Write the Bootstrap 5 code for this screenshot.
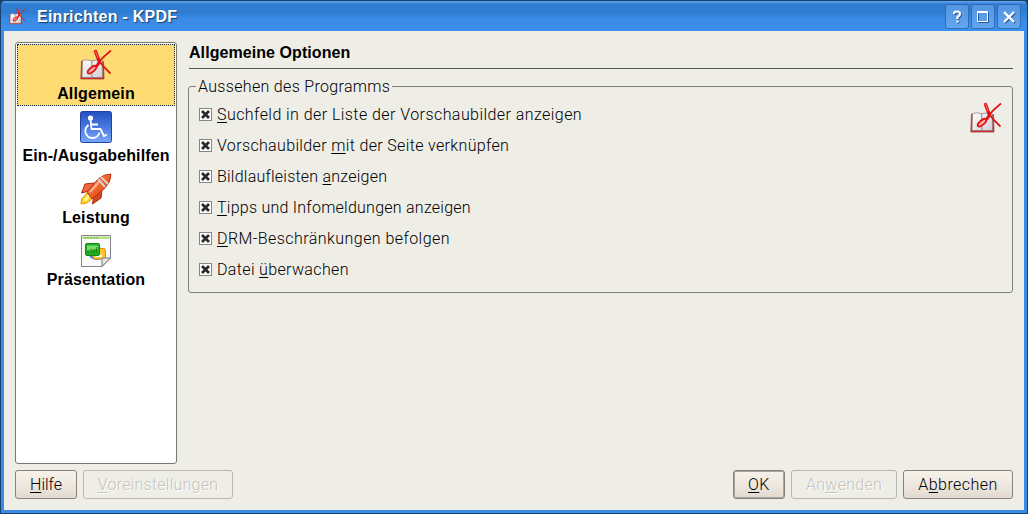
<!DOCTYPE html>
<html lang="de">
<head>
<meta charset="utf-8">
<title>Einrichten - KPDF</title>
<link href="https://cdn.jsdelivr.net/npm/bootstrap@5.3.0/dist/css/bootstrap.min.css" rel="stylesheet">
<style>
body{font:300 16px/20px Roboto,"Liberation Sans",sans-serif;color:#000;background:#173f70;width:1028px;height:514px;overflow:hidden}
.window{width:1028px;height:514px;border:1px solid #15406f;border-radius:5px 5px 0 0;background:linear-gradient(#68a7ed 0,#2f7ed3 3px,#2e7dd2 11px,#3a8ae6 18px,#3d8fed 29px,#3b8be5 30px);padding:0 3px 3px}
.titlebar{height:30px;padding:0 3px 0 5px}
.title-actions{gap:2px}
.caption{font:700 16px/20px "Liberation Sans",sans-serif;letter-spacing:.25px;color:#fff;text-shadow:1px 1px 1px #123e72;margin-left:11px;padding-top:1px}
.winbtn{width:24px;height:25px;border:1px solid #2b6dbb;border-radius:3px;background:linear-gradient(#5495df,#64a5ef);padding:0;margin-top:1px}
.client{background:#eeede6;height:479px;padding:11px 11px 11px}
.panes{gap:11px}
.pages{width:162px;height:422px;border:1px solid #777970;border-radius:3px;background:#fff;padding:1px}
.page-item{height:62px;font:700 16px/20px "Liberation Sans",sans-serif;letter-spacing:.13px;white-space:nowrap;padding-top:5px}
.page-item.active{background:#ffdc73;outline:1px dotted #123;outline-offset:-1px}
.page-item svg{width:32px;height:32px;display:block;margin-bottom:3px}
.page-title{font:700 16px/20px "Liberation Sans",sans-serif;letter-spacing:.07px;height:27px;padding-top:1px;border-bottom:1px solid #55574f;margin-left:1px}
.group{border:1px solid #808179;border-radius:3px;height:207px;margin-top:17px;padding:0 10px;position:relative}
.group-title{position:absolute;top:-10px;left:7px;background:#eeede6;padding:0 2px;letter-spacing:.32px}
.opts{padding-top:12px}
.opt{height:31px;gap:5px}
.s20{letter-spacing:.23px}.s25{letter-spacing:.25px}.s32{letter-spacing:.35px}.s41{letter-spacing:.44px}
.box{width:13px;height:13px;border:1px solid #85867f;background:#fff;display:block}
.group-icon{margin-top:15px}
.pushbtn{height:29px;border:1px solid #85847a;border-radius:3px;background:linear-gradient(#f6f2ea,#efe9e1 45%,#e2dad0);padding:0;font-weight:300;color:#000;line-height:27px}
.pushbtn.off{background:#eeede6;border-color:#b9b8b0;color:#c4c3bc;text-shadow:1px 1px #fff}
.pushbtn.ok{box-shadow:inset 0 0 0 1px #aaa69d}
.w-hilfe{width:62px}.w-vor{width:150px}.w-ok{width:52px}.w-anw{width:106px}.w-abb{width:110px}
.actions{gap:6px;margin-top:6px}
u{text-underline-offset:2px;text-decoration-thickness:1px;text-decoration-skip-ink:none}
</style>
</head>
<body>
<svg width="0" height="0" class="position-absolute">
<defs>
<linearGradient id="blue" x2="0" y2="1"><stop stop-color="#2450c0"/><stop offset=".5" stop-color="#4a7ae0"/><stop offset="1" stop-color="#78a8fa"/></linearGradient>
<linearGradient id="pageg" x2="1" y2="1"><stop stop-color="#fff"/><stop offset="1" stop-color="#cfcfd4"/></linearGradient>
<linearGradient id="rk" x2="1" y2="1"><stop stop-color="#ffab78"/><stop offset=".5" stop-color="#f0622c"/><stop offset="1" stop-color="#c5310f"/></linearGradient>
</defs>
<symbol id="book" viewBox="0 0 32 32">
<path d="M1.500 12L.8 30H24L23.500 12.500z" fill="#d62424" stroke="#a84040" stroke-width=".8"/>
<path d="M2.500 11.500Q7 10 11.800 11.800Q17 10 22.300 11.800L22.500 28.500H2z" fill="url(#pageg)" stroke="#8b7777" stroke-width=".7"/>
<path d="M11.800 12V28" stroke="#888" stroke-width="1"/>
<path d="M31 1.500Q24 7 18.500 13.500" stroke="#e01818" stroke-width="1.700" fill="none"/>
<path d="M18.500 11Q23 18 30.500 24.500" stroke="#d81414" stroke-width="1.700" fill="none"/>
<path d="M15.500 2.500L19.500 13" stroke="#e01212" stroke-width="3.400" stroke-linecap="round"/>
<path d="M15.500 2.500L18 9" stroke="#ff6a60" stroke-width="1" stroke-linecap="round"/>
<path d="M19.500 13L16.500 17.500" stroke="#e01212" stroke-width="3"/>
<ellipse cx="12" cy="20.700" rx="5.200" ry="2.200" transform="rotate(-40 12 20.700)" fill="#f9b0aa" stroke="#e31414" stroke-width="1.900"/>
</symbol>
<symbol id="cross" viewBox="0 0 11 11"><path d="M2 2L9 9M9 2L2 9" stroke="#2a2a2c" stroke-width="2.800"/></symbol>
</svg>
<div class="window d-flex flex-column">
<header class="titlebar d-flex align-items-center">
<svg width="17" height="17"><use href="#book"/></svg>
<div class="caption flex-grow-1">Einrichten - KPDF</div>
<div class="title-actions d-flex">
<button class="winbtn d-flex align-items-center justify-content-center"><svg width="22" height="22"><path d="M8 8V7.500Q8 5.500 11 5.500Q14 5.500 14 8Q14 9.500 11.500 11V13M11.500 14.500V16.500" fill="none" stroke="#245898" stroke-width="2" transform="translate(1 1)"/><path d="M8 8V7.500Q8 5.500 11 5.500Q14 5.500 14 8Q14 9.500 11.500 11V13M11.500 14.500V16.500" fill="none" stroke="#fff" stroke-width="2.200"/></svg></button>
<button class="winbtn d-flex align-items-center justify-content-center"><svg width="22" height="22"><path d="M6.500 6.500H16.500V16.500H6.500z" fill="none" stroke="#245898"/><path d="M5.500 5.500H15.500V15.500H5.500zM5.500 6.500H15.500" fill="none" stroke="#fff"/></svg></button>
<button class="winbtn d-flex align-items-center justify-content-center"><svg width="22" height="22"><path d="M7 7L17 17M17 7L7 17" stroke="#245898" stroke-width="2"/><path d="M6 6L16 16M16 6L6 16" stroke="#fff" stroke-width="2.400"/></svg></button>
</div>
</header>
<main class="client d-flex flex-column">
<div class="panes d-flex">
<nav class="pages">
<div class="page-item active d-flex flex-column align-items-center"><svg><use href="#book"/></svg><span>Allgemein</span></div>
<div class="page-item d-flex flex-column align-items-center"><svg viewBox="0 0 32 32"><rect x=".5" y=".5" width="31" height="31" rx="2" fill="url(#blue)" stroke="#2443a0"/><circle cx="10.500" cy="7" r="2.600" fill="#fff"/><path d="M10.500 8L11.500 18H20.500L24 25L27 23.500M11 13.500H18M8.500 14Q4.500 17 5.500 21.500Q7 27 12.500 27Q18 27 19.500 21.500" fill="none" stroke="#fff" stroke-width="1.800"/></svg><span>Ein-/Ausgabehilfen</span></div>
<div class="page-item d-flex flex-column align-items-center"><svg viewBox="0 0 32 32"><path d="M7 20L1.500 26L1 31L7 30L12 26z" fill="#ffd21c" stroke="#f0921e"/><path d="M5 28L9 22" stroke="#fff799" stroke-width="3"/><path d="M14 10L5 11L1.500 20L9 18z" fill="#ef6840" stroke="#b52b12"/><path d="M22 17L21 25L12.500 31L14 22z" fill="#d74520" stroke="#aa260e"/><path d="M7 19L18 6Q24 1 31 1Q31 9 25 15L12 26z" fill="url(#rk)" stroke="#bd3514"/><path d="M18 6L25 14M21 4L28 11" stroke="#d9d2d0" stroke-width="2"/><path d="M10 19L19 9" stroke="#ffb48e" stroke-width="2"/></svg><span>Leistung</span></div>
<div class="page-item d-flex flex-column align-items-center"><svg viewBox="0 0 32 32"><path d="M1.500 .5H30.500V23L22 31.500H1.500z" fill="#fafafa" stroke="#858585"/><path d="M2.500 1.500H29.500V4H2.500z" fill="#b4e184"/><path d="M4 2.800H18" stroke="#6aae40" stroke-dasharray="2 1"/><ellipse cx="17" cy="18.500" rx="8.500" ry="6.500" fill="#3e82e6"/><rect x="13" y="13.500" width="12.500" height="10.500" rx="2" fill="#ffc62a" stroke="#e28d12"/><path d="M17 19.500H22V22H15z" fill="#fff"/><rect x="5.500" y="8.500" width="14" height="12" rx="1.500" fill="#22ad20" stroke="#128a16"/><path d="M7 10.500H18V14L7 16z" fill="#78db66"/><path d="M8 18V15M11 18V13.500M14 18V14M16.500 18V12" stroke="#0c7a14" stroke-width=".7"/><path d="M30.500 23L22 31.500V23z" fill="#e5e5e5" stroke="#777"/></svg><span>Präsentation</span></div>
</nav>
<section class="flex-grow-1">
<div class="page-title">Allgemeine Optionen</div>
<div class="group">
<div class="group-title">Aussehen des Programms</div>
<div class="d-flex justify-content-between">
<div class="opts">
<label class="opt d-flex align-items-center"><span class="box"><svg class="d-block" width="11" height="11"><use href="#cross"/></svg></span><span class="s41"><u>S</u>uchfeld in der Liste der Vorschaubilder anzeigen</span></label>
<label class="opt d-flex align-items-center"><span class="box"><svg class="d-block" width="11" height="11"><use href="#cross"/></svg></span><span class="s32">Vorschaubilder <u>m</u>it der Seite verknüpfen</span></label>
<label class="opt d-flex align-items-center"><span class="box"><svg class="d-block" width="11" height="11"><use href="#cross"/></svg></span><span class="s20">Bildlaufleisten <u>a</u>nzeigen</span></label>
<label class="opt d-flex align-items-center"><span class="box"><svg class="d-block" width="11" height="11"><use href="#cross"/></svg></span><span class="s25"><u>T</u>ipps und Infomeldungen anzeigen</span></label>
<label class="opt d-flex align-items-center"><span class="box"><svg class="d-block" width="11" height="11"><use href="#cross"/></svg></span><span class="s41"><u>D</u>RM-Beschränkungen befolgen</span></label>
<label class="opt d-flex align-items-center"><span class="box"><svg class="d-block" width="11" height="11"><use href="#cross"/></svg></span><span class="s32">Datei <u>ü</u>berwachen</span></label>
</div>
<svg class="group-icon" width="32" height="32"><use href="#book"/></svg>
</div>
</div>
</section>
</div>
<footer class="actions d-flex">
<button class="pushbtn w-hilfe"><u>H</u>ilfe</button>
<button class="pushbtn off w-vor s25 me-auto"><u>V</u>oreinstellungen</button>
<button class="pushbtn ok w-ok s41"><u>O</u>K</button>
<button class="pushbtn off w-anw s25">An<u>w</u>enden</button>
<button class="pushbtn w-abb s41">A<u>b</u>brechen</button>
</footer>
</main>
</div>
<script src="https://cdn.jsdelivr.net/npm/bootstrap@5.3.0/dist/js/bootstrap.bundle.min.js"></script>
</body>
</html>
